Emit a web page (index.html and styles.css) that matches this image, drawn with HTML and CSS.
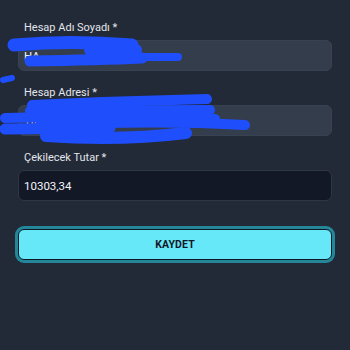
FILE: index.html
```html
<!DOCTYPE html>
<html lang="tr">
<head>
<meta charset="utf-8">
<title>Hesap</title>
<link rel="stylesheet" href="styles.css">
</head>
<body>
<div class="page">
  <form class="form">
    <div class="field">
      <label class="label">Hesap Adı Soyadı *</label>
      <div class="input input-disabled">HA</div>
    </div>
    <div class="field">
      <label class="label">Hesap Adresi *</label>
      <div class="input input-disabled">TR</div>
    </div>
    <div class="field">
      <label class="label">Çekilecek Tutar *</label>
      <div class="input input-active">10303,34</div>
    </div>
    <button type="button" class="btn">KAYDET</button>
  </form>
  <svg class="scribble" width="350" height="350" viewBox="0 0 350 350" fill="none" stroke="#1f4ffd" stroke-linecap="round" stroke-linejoin="round">
    <path d="M14 45 Q 70 40 132 45" stroke-width="13"/>
    <path d="M90 50 L 136 50" stroke-width="12"/>
    <path d="M30 61 Q 100 60 142 58" stroke-width="11"/>
    <path d="M120 57 L 178 57" stroke-width="8"/>
    <path d="M3 80 L 12 78" stroke-width="6"/>
    <path d="M32 105 Q 120 101 207 99" stroke-width="10"/>
    <path d="M30 111 L 210 110" stroke-width="10"/>
    <path d="M5 118 Q 120 115 215 119" stroke-width="10"/>
    <path d="M40 125 Q 160 120 245 125" stroke-width="10"/>
    <path d="M5 129 L 110 128" stroke-width="11"/>
    <path d="M46 136 Q 120 141 186 133" stroke-width="12"/>
  </svg>
</div>
</body>
</html>
```

FILE: styles.css
```css
html, body {
  margin: 0;
  padding: 0;
  background: #222937;
}
body {
  font-family: Roboto, "Noto Sans", sans-serif;
  width: 350px;
  height: 350px;
  overflow: hidden;
}
.page {
  position: relative;
  width: 350px;
  height: 350px;
}
.form {
  padding: 20px 18px 0 18px;
  display: flex;
  flex-direction: column;
}
.field {
  display: flex;
  flex-direction: column;
  gap: 4px;
  margin-bottom: 14px;
}
.label {
  padding-left: 6px;
  font-size: 11px;
  line-height: 16px;
  color: #e3e6ea;
}
.input {
  box-sizing: border-box;
  height: 31px;
  border-radius: 6px;
  padding: 0 5px;
  display: flex;
  align-items: center;
  font-size: 11.5px;
  color: #f3f4f6;
}
.input-disabled {
  background: #343d4c;
  border: 1px solid #394252;
}
.input-active {
  background: #121826;
  border: 1px solid #2f3746;
}
.btn {
  margin-top: 14px;
  box-sizing: border-box;
  width: 100%;
  height: 31px;
  border: 1px solid #0c1a24;
  border-radius: 6px;
  background: #67e8f9;
  box-shadow: 0 0 0 3px #25869a;
  color: #111827;
  font-family: Roboto, "Noto Sans", sans-serif;
  font-weight: 700;
  font-size: 10.5px;
  letter-spacing: 0.1px;
}
.scribble {
  position: absolute;
  left: 0;
  top: 0;
  pointer-events: none;
}
```
